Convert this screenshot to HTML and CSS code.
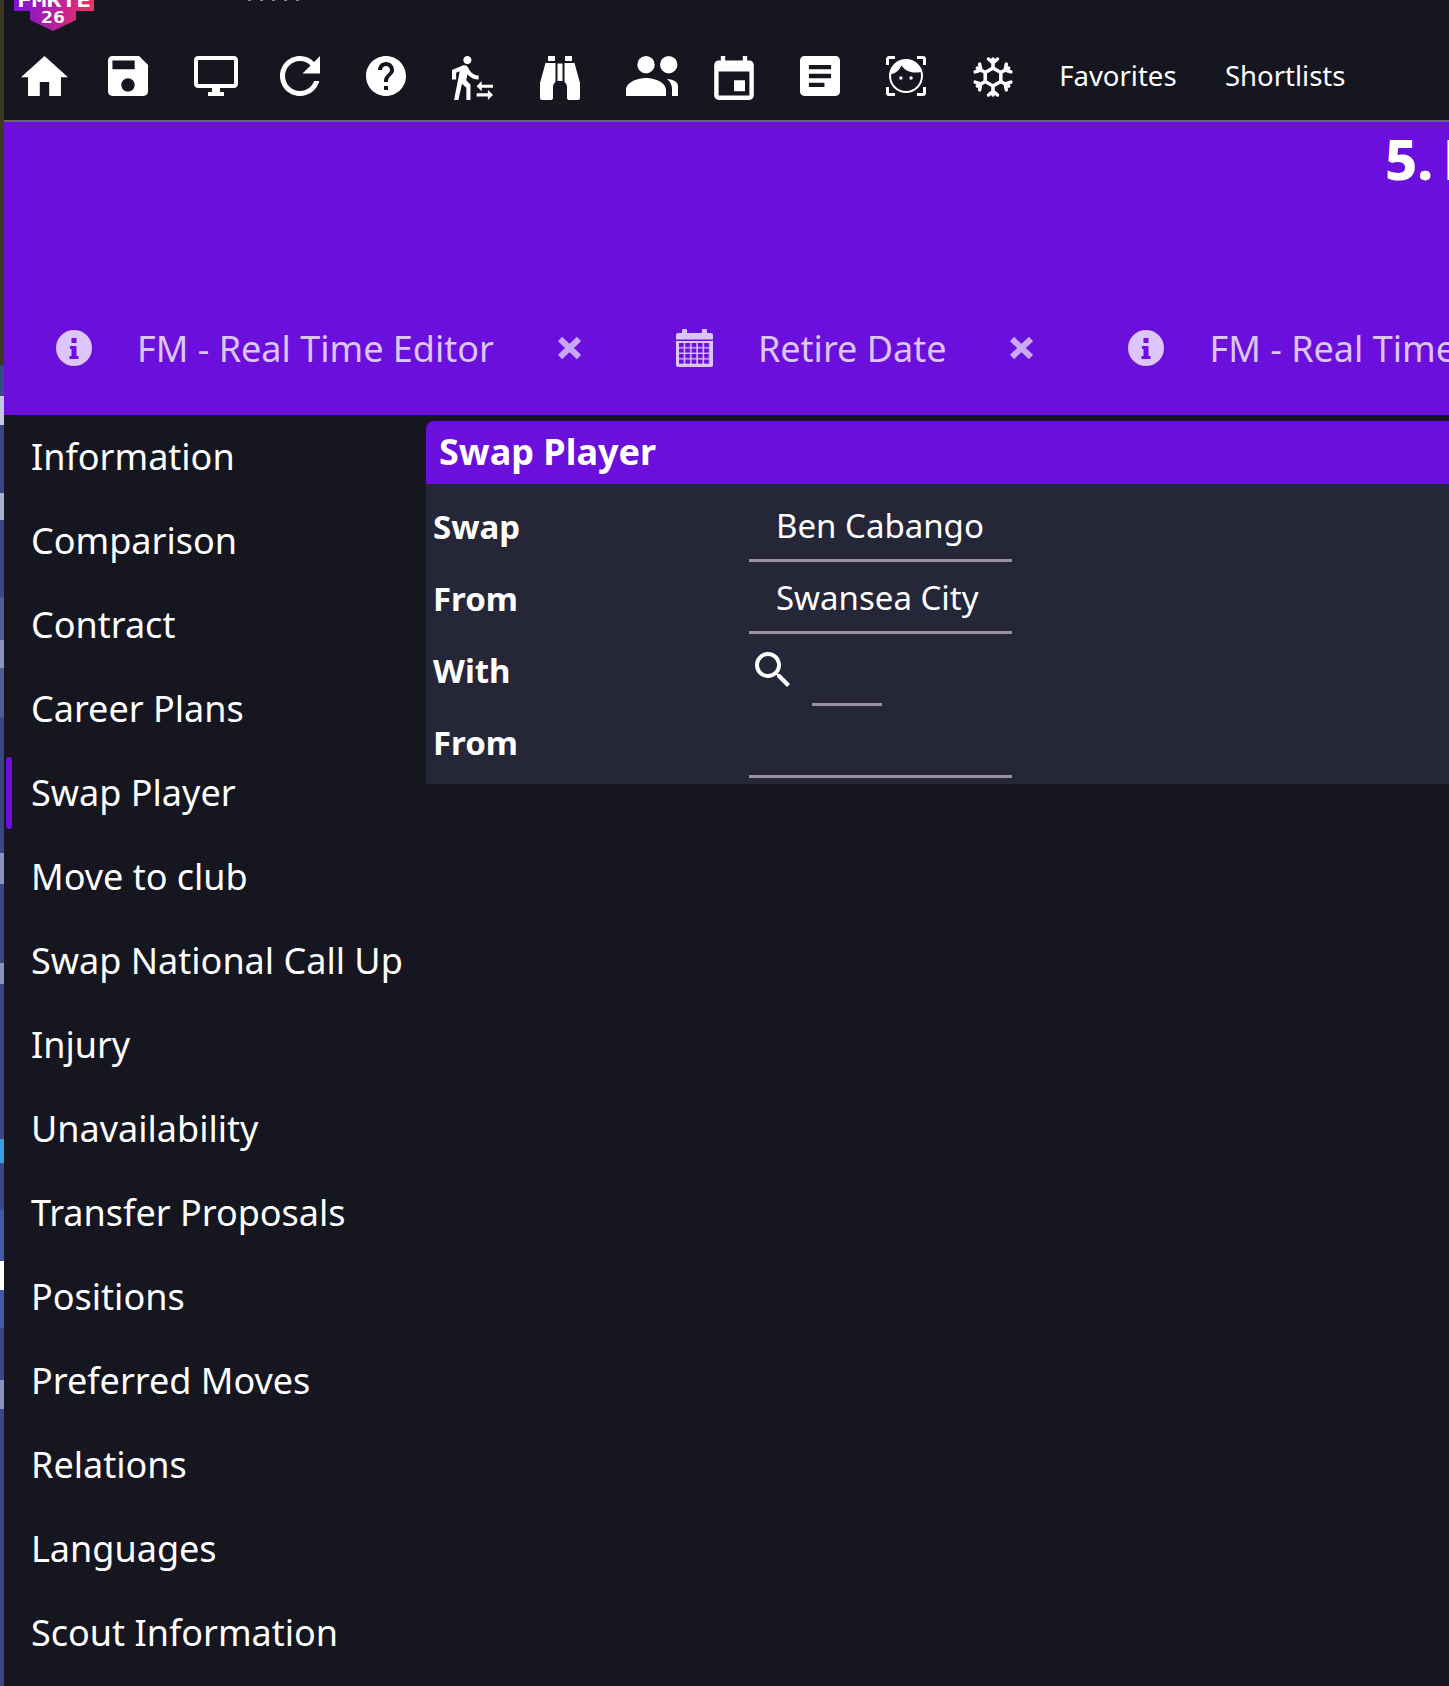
FILE: index.html
```html
<!DOCTYPE html>
<html lang="en">
<head>
  <meta charset="UTF-8" />
  <title>FMRTE 26 - Swap Player</title>
  <link rel="stylesheet" href="styles.css">
</head>
<body>

<div class="edge-strip"></div>

<div class="app">
  <header class="topbar">
    <div class="top-row">
      <svg class="logo" viewBox="0 0 80 31">
        <defs>
          <linearGradient id="logo-grad" x1="0" x2="1" y1="0" y2="0">
            <stop offset="0" stop-color="#7a12d8"/>
            <stop offset="1" stop-color="#f5305f"/>
          </linearGradient>
        </defs>
        <path fill="url(#logo-grad)" d="M0 0H80V11H62V20L39 31L16 20V11H0Z"/>
        <text class="logo-name" x="3" y="7" textLength="74" lengthAdjust="spacingAndGlyphs">FMRTE</text>
        <text class="logo-year" x="27" y="23" textLength="24" lengthAdjust="spacingAndGlyphs">26</text>
      </svg>
      <div class="cut-dots"><i></i><i></i><i></i><i></i><i></i></div>
    </div>

    <nav class="toolbar">
      <!-- home -->
      <svg class="tool tool-home" width="47" height="40" viewBox="2 3 20 17" preserveAspectRatio="none"><path d="M10 20v-6h4v6h5v-8h3L12 3 2 12h3v8z"/></svg>
      <!-- save -->
      <svg class="tool" width="40" height="40" viewBox="3 3 18 18"><path d="M17 3H5c-1.11 0-2 .9-2 2v14c0 1.1.89 2 2 2h14c1.1 0 2-.9 2-2V7l-4-4zm-5 16c-1.66 0-3-1.34-3-3s1.34-3 3-3 3 1.34 3 3-1.34 3-3 3zm3-10H5V5h10v4z"/></svg>
      <!-- screen -->
      <svg class="tool tool-screen" width="44" height="40" viewBox="1 2 22 20"><path d="M21 2H3c-1.1 0-2 .9-2 2v12c0 1.1.9 2 2 2h7v2H8v2h8v-2h-2v-2h7c1.1 0 2-.9 2-2V4c0-1.1-.9-2-2-2zm0 14H3V4h18v12z"/></svg>
      <!-- reload -->
      <svg class="tool" width="40" height="40" viewBox="4 4 16 16"><path d="M17.65 6.35C16.2 4.9 14.21 4 12 4c-4.42 0-7.99 3.58-7.99 8s3.57 8 7.99 8c3.73 0 6.84-2.55 7.73-6h-2.08c-.82 2.33-3.04 4-5.65 4-3.31 0-6-2.69-6-6s2.69-6 6-6c1.66 0 3.14.69 4.22 1.78L13 11h7V4l-2.35 2.35z"/></svg>
      <!-- help -->
      <svg class="tool" width="40" height="40" viewBox="2 2 20 20"><path d="M12 2C6.48 2 2 6.48 2 12s4.48 10 10 10 10-4.48 10-10S17.52 2 12 2zm1 17h-2v-2h2v2zm2.07-7.75l-.9.92C13.45 12.9 13 13.5 13 15h-2v-.5c0-1.1.45-2.1 1.17-2.83l1.24-1.26c.37-.36.59-.86.59-1.41 0-1.1-.9-2-2-2s-2 .9-2 2H8c0-2.21 1.79-4 4-4s4 1.79 4 4c0 .88-.36 1.68-.93 2.25z"/></svg>
      <!-- transfer -->
      <svg class="tool" width="41" height="44" viewBox="2 1.5 20 21.5"><path d="M16.49 15.5v-1.75L14 16.25l2.49 2.5V17H22v-1.5zm3.02 4.25H14v1.5h5.51V23L22 20.5 19.51 18zM9.5 5.5c1.1 0 2-.9 2-2s-.9-2-2-2-2 .9-2 2 .9 2 2 2zM5.75 8.9L3 23h2.1l1.75-8L9 17v6h2v-7.55L8.95 13.4l.6-3C10.85 12 12.8 13 15 13v-2c-1.85 0-3.45-1-4.35-2.45l-.95-1.6C9.35 6.35 8.7 6 8 6c-.25 0-.5.05-.75.15L2 8.3V13h2V9.65l1.75-.75"/></svg>
      <!-- binoculars -->
      <svg class="tool" width="40" height="44" viewBox="0 0 40 44"><path d="M8 0H15V5H8ZM25 0H32V5H25ZM17.5 7.5H22.5V25H17.5ZM5.5 7H15.5V26C13 28 13 30 13 32V42a2 2 0 0 1-2 2H2a2 2 0 0 1-2-2V27ZM34.5 7H24.5V26C27 28 27 30 27 32V42a2 2 0 0 0 2 2H38a2 2 0 0 0 2-2V27Z"/></svg>
      <!-- people -->
      <svg class="tool tool-people" width="52" height="40" viewBox="0 0 52 40"><circle cx="20" cy="8.7" r="8.7"/><circle cx="42.7" cy="8.7" r="8.7"/><path d="M0 40V34C0 26 12 22 20 22S40 26 40 34V40ZM41 23C48 23.5 52 26 52 30V40H46V33C46 29 44 25.5 41 23Z"/></svg>
      <!-- calendar -->
      <svg class="tool" width="40" height="44" viewBox="3 1 18 20"><path d="M17 12h-5v5h5v-5zM16 1v2H8V1H6v2H5c-1.11 0-1.99.9-1.99 2L3 19c0 1.1.89 2 2 2h14c1.1 0 2-.9 2-2V5c0-1.1-.9-2-2-2h-1V1h-2zm3 18H5V8h14v11z"/></svg>
      <!-- article -->
      <svg class="tool" width="40" height="40" viewBox="3 3 18 18"><path d="M19 3H5c-1.1 0-2 .9-2 2v14c0 1.1.9 2 2 2h14c1.1 0 2-.9 2-2V5c0-1.1-.9-2-2-2zm-5 14H7v-2h7v2zm3-4H7v-2h10v2zm0-4H7V7h10v2z"/></svg>
      <!-- face -->
      <svg class="tool" width="40" height="40" viewBox="0 0 40 40">
        <path transform="translate(3 3) scale(1.7) translate(-2 -2)" d="M9,12.2A1,1 0 0,0 8,13.2A1,1 0 0,0 9,14.2A1,1 0 0,0 10,13.2A1,1 0 0,0 9,12.2M15,12.2A1,1 0 0,0 14,13.2A1,1 0 0,0 15,14.2A1,1 0 0,0 16,13.2A1,1 0 0,0 15,12.2M12,2A10,10 0 0,0 2,12A10,10 0 0,0 12,22A10,10 0 0,0 22,12A10,10 0 0,0 12,2M12,20.8C7.1,20.8 3.2,16.9 3.2,12C3.2,11.6 3.2,11.3 3.3,11C6.4,10.1 8.3,8.2 9.3,5.8C11.1,8.3 14,10 17.4,10C18.4,10 19.6,9.9 20.6,9.7C20.7,10.4 20.8,11.2 20.8,12C20.8,16.9 16.9,20.8 12,20.8Z"/>
        <path class="brackets" d="M1.500 9V3a1.500 1.500 0 0 1 1.500-1.500H9M31 1.500H37a1.500 1.500 0 0 1 1.500 1.500V9M38.500 31V37a1.500 1.500 0 0 1-1.500 1.500H31M9 38.500H3a1.500 1.500 0 0 1-1.500-1.500V31"/>
      </svg>
      <!-- snowflake -->
      <svg class="tool" width="40" height="42" viewBox="0 0 40 42">
        <defs>
          <g id="flake-arm"><path class="flake" d="M20 12V3M20 7L15.500 3M20 7L24.500 3"/></g>
        </defs>
        <path class="flake" d="M20 12L27.800 16.500V25.500L20 30L12.200 25.500V16.500Z"/>
        <use href="#flake-arm" transform="rotate(0 20 21)"/>
        <use href="#flake-arm" transform="rotate(60 20 21)"/>
        <use href="#flake-arm" transform="rotate(120 20 21)"/>
        <use href="#flake-arm" transform="rotate(180 20 21)"/>
        <use href="#flake-arm" transform="rotate(240 20 21)"/>
        <use href="#flake-arm" transform="rotate(300 20 21)"/>
      </svg>

      <a class="tool-link">Favorites</a>
      <a class="tool-link tool-link-last">Shortlists</a>
    </nav>
  </header>

  <section class="banner">
    <div class="banner-title">5. Ben Cabango</div>
    <div class="tabs">
      <div class="tab">
        <svg class="tab-icon" width="36" height="36" viewBox="0 0 36 36"><path fill-rule="evenodd" d="M18 0a18 18 0 1 0 0 36a18 18 0 1 0 0-36ZM15.500 8h5v5h-5ZM14 16h6.500v10H22.500v3H13.500v-3H15.500v-7H14Z"/></svg>
        <span class="tab-label">FM - Real Time Editor</span>
        <svg class="tab-close" width="25" height="24" viewBox="0 0 25 24"><path d="M3 3L22 21M22 3L3 21"/></svg>
      </div>
      <div class="tab">
        <svg class="tab-icon" width="37" height="38" viewBox="0 0 37 38">
          <defs>
            <pattern id="cal-cells" x="3" y="14" width="6.300" height="5.500" patternUnits="userSpaceOnUse"><rect width="4.800" height="4.200" fill="#6a0fdc"/></pattern>
          </defs>
          <path d="M7 0h3a1 1 0 0 1 1 1v3h15V1a1 1 0 0 1 1-1h3a1 1 0 0 1 1 1v3h4a2 2 0 0 1 2 2v30a2 2 0 0 1-2 2H2a2 2 0 0 1-2-2V6a2 2 0 0 1 2-2h4V1a1 1 0 0 1 1-1Z"/>
          <rect x="0" y="10.500" width="37" height="1.500" fill="#6a0fdc"/>
          <rect x="3" y="14" width="31" height="21.500" fill="url(#cal-cells)"/>
        </svg>
        <span class="tab-label">Retire Date</span>
        <svg class="tab-close" width="25" height="24" viewBox="0 0 25 24"><path d="M3 3L22 21M22 3L3 21"/></svg>
      </div>
      <div class="tab">
        <svg class="tab-icon" width="36" height="36" viewBox="0 0 36 36"><path fill-rule="evenodd" d="M18 0a18 18 0 1 0 0 36a18 18 0 1 0 0-36ZM15.500 8h5v5h-5ZM14 16h6.500v10H22.500v3H13.500v-3H15.500v-7H14Z"/></svg>
        <span class="tab-label">FM - Real Time Editor</span>
      </div>
    </div>
  </section>

  <div class="main">
    <aside class="sidebar">
      <div class="nav-item">Information</div>
      <div class="nav-item">Comparison</div>
      <div class="nav-item">Contract</div>
      <div class="nav-item">Career Plans</div>
      <div class="nav-item active">Swap Player</div>
      <div class="nav-item">Move to club</div>
      <div class="nav-item">Swap National Call Up</div>
      <div class="nav-item">Injury</div>
      <div class="nav-item">Unavailability</div>
      <div class="nav-item">Transfer Proposals</div>
      <div class="nav-item">Positions</div>
      <div class="nav-item">Preferred Moves</div>
      <div class="nav-item">Relations</div>
      <div class="nav-item">Languages</div>
      <div class="nav-item">Scout Information</div>
    </aside>

    <div class="content">
      <div class="panel">
        <div class="panel-head">Swap Player</div>
        <div class="panel-body">
          <div class="form-row">
            <label class="form-label">Swap</label>
            <div class="field">Ben Cabango</div>
          </div>
          <div class="form-row">
            <label class="form-label">From</label>
            <div class="field">Swansea City</div>
          </div>
          <div class="form-row">
            <label class="form-label">With</label>
            <div class="search-field">
              <svg class="search-icon" width="35" height="35" viewBox="3 3 17.490 17.490"><path d="M15.500 14h-.79l-.28-.27C15.410 12.590 16 11.110 16 9.500 16 5.910 13.090 3 9.500 3S3 5.910 3 9.500 5.910 16 9.500 16c1.610 0 3.090-.59 4.230-1.570l.27.28v.79l5 4.990L20.490 19l-4.990-5zm-6 0C7.010 14 5 11.990 5 9.500S7.010 5 9.500 5 14 7.010 14 9.500 11.990 14 9.500 14z"/></svg>
              <div class="search-input"></div>
            </div>
          </div>
          <div class="form-row">
            <label class="form-label">From</label>
            <div class="field"></div>
          </div>
        </div>
      </div>
    </div>
  </div>
</div>

</body>
</html>
```

FILE: styles.css
```css
html, body {
  height: 1686px;
  overflow: hidden;
}

body {
  margin: 0;
  display: flex;
  background-color: #15161f;
  font-family: "Noto Sans", sans-serif;
  color: white;
}

/* sliver of the desktop behind the window */
.edge-strip {
  width: 4px;
  flex-shrink: 0;
  background: linear-gradient(to bottom,
    #3a3822 0, #3a3822 365px,
    #3a4786 365px, #3a4786 396px,
    #c4c9e0 396px, #c4c9e0 425px,
    #3a4786 425px, #3a4786 493px,
    #aab1d0 493px, #aab1d0 520px,
    #3a4786 520px, #3a4786 597px,
    #505c96 597px, #505c96 640px,
    #8a93bb 640px, #8a93bb 668px,
    #505c96 668px, #505c96 717px,
    #3a4786 717px, #3a4786 853px,
    #8a93bb 853px, #8a93bb 884px,
    #3a4786 884px, #3a4786 963px,
    #8a93bb 963px, #8a93bb 984px,
    #3a4786 984px, #3a4786 1139px,
    #3aa0dc 1139px, #3aa0dc 1163px,
    #3a4786 1163px, #3a4786 1210px,
    #4458a8 1210px, #4458a8 1261px,
    #ffffff 1261px, #ffffff 1290px,
    #4458a8 1290px, #4458a8 1328px,
    #3a4786 1328px, #3a4786 1380px,
    #8a93bb 1380px, #8a93bb 1409px,
    #3a4786 1409px);
}

.app {
  flex: 1;
  min-width: 0;
  overflow: hidden;
}

/* top bar */
.topbar {
  height: 120px;
  border-bottom: 2px solid #666;
}

.top-row {
  height: 56px;
  padding-left: 10px;
  display: flex;
  align-items: flex-start;
}

.logo {
  width: 80px;
  height: 31px;
}

.logo-name {
  font-family: "DejaVu Sans Mono", monospace;
  font-size: 19px;
  font-weight: bold;
  fill: white;
}

.logo-year {
  font-family: "DejaVu Sans Mono", monospace;
  font-size: 16px;
  font-weight: bold;
  fill: white;
}

.cut-dots {
  display: flex;
  gap: 9px;
  margin-left: 154px;
}

.cut-dots i {
  width: 3px;
  height: 1px;
  background-color: #8a8a90;
}

.toolbar {
  display: flex;
  align-items: flex-start;
  gap: 46.4px;
  padding-left: 17px;
}

.tool {
  fill: white;
  flex-shrink: 0;
}

.tool-home {
  margin-right: -6.5px;
}

.tool-screen {
  margin-right: -5px;
}

.tool-people {
  margin-right: -11px;
}

.brackets {
  fill: none;
  stroke: white;
  stroke-width: 3px;
}

.flake {
  fill: none;
  stroke: white;
  stroke-width: 3.5px;
  stroke-linecap: round;
}

.tool-link {
  font-size: 27.5px;
  line-height: 40px;
  color: white;
  white-space: nowrap;
}

.tool-link-last {
  margin-left: 2px;
}

/* purple banner with the title and open tabs */
.banner {
  height: 293px;
  background-color: #6a0fdc;
}

.banner-title {
  padding-left: 1381px;
  height: 194px;
  font-size: 56px;
  font-weight: 800;
  line-height: 72px;
  word-spacing: -5px;
  white-space: nowrap;
}

.tabs {
  display: flex;
  gap: 94px;
  padding-left: 52px;
  white-space: nowrap;
}

.tab {
  display: flex;
  align-items: center;
  height: 64px;
}

.tab-icon {
  fill: #dcc5fa;
  flex-shrink: 0;
}

.tab-label {
  margin-left: 45px;
  font-size: 36px;
  color: #dcc5fa;
}

.tab-close {
  margin-left: 63px;
  flex-shrink: 0;
}

.tab-close path {
  fill: none;
  stroke: #c9a9f7;
  stroke-width: 6px;
}

/* sidebar + content */
.main {
  display: flex;
}

.sidebar {
  width: 422px;
  flex-shrink: 0;
}

.nav-item {
  position: relative;
  height: 84px;
  line-height: 84px;
  padding-left: 27px;
  font-size: 36px;
  white-space: nowrap;
}

.nav-item.active::before {
  content: "";
  position: absolute;
  left: 2px;
  top: 6px;
  width: 6px;
  height: 72px;
  border-radius: 3px;
  background-color: #6a0fdc;
}

.content {
  flex: 1;
  padding-top: 6px;
}

.panel-head {
  height: 63px;
  line-height: 62px;
  padding-left: 13px;
  border-radius: 8px 0 0 0;
  background-color: #6a0fdc;
  font-size: 36px;
  font-weight: bold;
}

.panel-body {
  padding: 6px 0;
  background-color: #252738;
}

.form-row {
  display: flex;
  height: 72px;
}

.form-label {
  width: 323px;
  padding-left: 7px;
  box-sizing: border-box;
  font-size: 33px;
  font-weight: bold;
  line-height: 74px;
}

.field {
  width: 263px;
  height: 72px;
  box-sizing: border-box;
  padding-left: 27px;
  border-bottom: 3px solid #9a8fa3;
  font-size: 33px;
  line-height: 72px;
  white-space: nowrap;
}

.search-field {
  display: flex;
  align-items: flex-start;
  height: 72px;
  padding-left: 6px;
}

.search-icon {
  margin-top: 18px;
  fill: white;
}

.search-input {
  width: 70px;
  height: 72px;
  box-sizing: border-box;
  margin-left: 22px;
  border-bottom: 3px solid #9a8fa3;
}
```
